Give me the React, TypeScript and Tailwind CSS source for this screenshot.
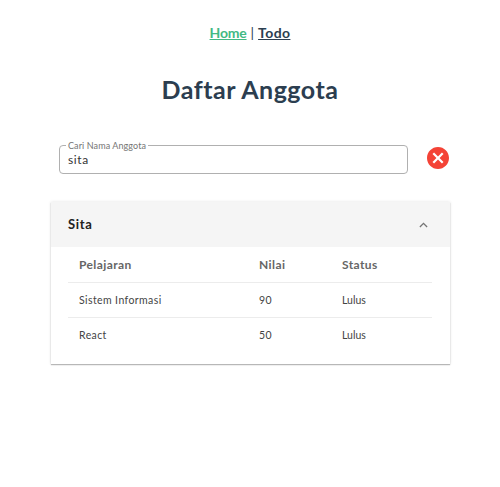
const rows = [
  { subject: "Sistem Informasi", score: 90, status: "Lulus" },
  { subject: "React", score: 50, status: "Lulus" },
];

export default function App() {
  return (
    <div className="h-[487px] w-[500px] overflow-hidden bg-white font-['Comic_Sans_MS','Lato',sans-serif] text-[#2c3e50]">
      <nav className="flex h-[66px] items-center justify-center gap-[4px] whitespace-pre pb-[2px] text-[14px] font-bold">
        <a className="tracking-[-0.2px] text-[#42b983] underline">Home</a>
        <span className="font-normal">|</span>
        <a className="tracking-[0.4px] underline">Todo</a>
      </nav>
      <h1 className="flex h-[48px] items-center justify-center text-[25px] font-bold tracking-[0.5px]">
        Daftar Anggota
      </h1>

      <div className="mt-[26px] ml-[59px] flex">
        <fieldset className="h-[34px] w-[349px] rounded-[4px] border border-[#b0b0b0] px-[8px]">
          <legend className="-ml-[2px] h-[11px] whitespace-nowrap px-[2px] text-[9px] leading-[12px] tracking-[0.1px] text-[#757575]">
            Cari Nama Anggota
          </legend>
          <div className="h-[16px] text-[12px] leading-[18px] tracking-[0.6px] text-[#333]">sita</div>
        </fieldset>
        <svg viewBox="2 2 20 20" className="mt-[7px] ml-[19px] h-[22px] w-[22px]">
          <path
            fill="#f44336"
            d="M12 2C6.47 2 2 6.47 2 12s4.47 10 10 10 10-4.47 10-10S17.53 2 12 2zm5 13.59L15.59 17 12 13.41 8.41 17 7 15.59 10.59 12 7 8.41 8.41 7 12 10.59 15.59 7 17 8.41 13.41 12 17 15.59z"
          />
        </svg>
      </div>

      <section className="mt-[28px] ml-[51px] h-[162px] w-[399px] bg-white shadow-[0_1px_1px_rgba(0,0,0,0.25),0_0_3px_rgba(0,0,0,0.12)]">
        <header className="flex h-[45px] items-center justify-between bg-[#f5f5f5] pr-[22px] pl-[17px]">
          <span className="text-[13px] font-bold tracking-[0.7px] text-[#212121]">Sita</span>
          <svg viewBox="0 0 10 6" className="h-[6px] w-[9px]" fill="none" stroke="#757575" strokeWidth="1.5">
            <path d="M1 5.2 5 1.2l4 4" />
          </svg>
        </header>
        <table className="mx-[17px] w-[364px] table-fixed border-collapse text-left text-[10.5px] tracking-[0.4px] text-[#444]">
          <colgroup>
            <col className="w-[180px]" />
            <col className="w-[82px]" />
            <col />
          </colgroup>
          <thead>
            <tr className="h-[35px] border-b border-[#ececec] text-[12px] text-[#666]">
              <th className="pt-[2px] pl-[11px]">Pelajaran</th>
              <th className="pt-[2px] pl-[11px]">Nilai</th>
              <th className="pt-[2px] pl-[12px]">Status</th>
            </tr>
          </thead>
          <tbody>
            {rows.map((row) => (
              <tr key={row.subject} className="h-[35px] border-b border-[#ececec] last:border-b-0">
                <td className="pt-[2px] pl-[11px]">{row.subject}</td>
                <td className="pt-[2px] pl-[11px]">{row.score}</td>
                <td className="pt-[2px] pl-[12px] tracking-normal">{row.status}</td>
              </tr>
            ))}
          </tbody>
        </table>
      </section>
    </div>
  );
}
